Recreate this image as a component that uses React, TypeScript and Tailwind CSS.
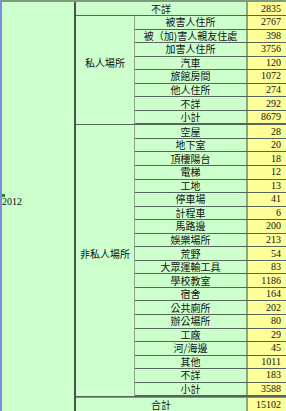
import React from "react";

const privateRows: [string, string][] = [
  ["被害人住所", "2767"],
  ["被（加)害人親友住處", "398"],
  ["加害人住所", "3756"],
  ["汽車", "120"],
  ["旅館房間", "1072"],
  ["他人住所", "274"],
  ["不詳", "292"],
  ["小計", "8679"],
];

const publicRows: [string, string][] = [
  ["空屋", "28"],
  ["地下室", "20"],
  ["頂樓陽台", "18"],
  ["電梯", "12"],
  ["工地", "13"],
  ["停車場", "41"],
  ["計程車", "6"],
  ["馬路邊", "200"],
  ["娛樂場所", "213"],
  ["荒野", "54"],
  ["大眾運輸工具", "83"],
  ["學校教室", "1186"],
  ["宿舍", "164"],
  ["公共廁所", "202"],
  ["辦公場所", "80"],
  ["工廠", "29"],
  ["河/海邊", "45"],
  ["其他", "1011"],
  ["不詳", "183"],
  ["小計", "3588"],
];

const cjk = { fontFamily: '"Noto Sans CJK TC", "Noto Sans", sans-serif' };
const serif = { fontFamily: '"Liberation Serif", serif' };

function Row({ label, value }: { label: string; value: string }) {
  return (
    <div className="flex h-[13.55px] border-b border-[#55665a]">
      <div
        className="w-[113px] border-r-2 border-[#8aa58a] flex items-center justify-center text-[10px] leading-none text-[#111] whitespace-nowrap"
        style={cjk}
      >
        {label}
      </div>
      <div
        className="flex-1 bg-[#ffff99] flex items-center justify-end pr-[5px] text-[10px] leading-none text-[#111]"
        style={serif}
      >
        {value}
      </div>
    </div>
  );
}

function Block({ title, rows }: { title: string; rows: [string, string][] }) {
  return (
    <div className="flex border-b border-[#55665a]">
      <div
        className="w-[59px] border-r border-[#8aa58a] flex items-center justify-center pb-[14px] text-[10px] leading-none text-[#111]"
        style={cjk}
      >
        {title}
      </div>
      <div className="flex-1 flex flex-col">
        {rows.map(([l, v], i) => (
          <Row key={i} label={l} value={v} />
        ))}
      </div>
    </div>
  );
}

export default function App() {
  return (
    <div className="w-[286px] h-[411px] overflow-hidden bg-[#ccffcc] border-t-2 border-l-2 border-t-[#7d9b7d] border-l-[#7f8be0] flex">
      <div className="w-[74px] shrink-0 border-r-2 border-[#45554a] flex items-center pb-[10px]">
        <span className="relative text-[10px] leading-none text-[#111]" style={serif}>
          <span className="absolute left-0 top-[-3px] w-[3px] h-[3px] bg-[#1a8a1a]" />
          2012
        </span>
      </div>
      <div className="flex-1 flex flex-col">
        <div className="flex h-[14px] border-b border-[#55665a] shrink-0">
          <div
            className="w-[172px] border-r-2 border-[#8aa58a] flex items-center justify-center text-[10px] leading-none text-[#111]"
            style={cjk}
          >
            不詳
          </div>
          <div
            className="flex-1 bg-[#ffff99] flex items-center justify-end pr-[5px] text-[10px] leading-none text-[#111]"
            style={serif}
          >
            2835
          </div>
        </div>
        <Block title="私人場所" rows={privateRows} />
        <Block title="非私人場所" rows={publicRows} />
        <div className="flex h-[14px] border-t border-[#7d9b7d] shrink-0">
          <div
            className="w-[172px] border-r-2 border-[#8aa58a] flex items-center justify-center text-[10px] leading-none text-[#111]"
            style={cjk}
          >
            合計
          </div>
          <div
            className="flex-1 bg-[#ffff99] flex items-center justify-end pr-[5px] text-[10px] leading-none text-[#111]"
            style={serif}
          >
            15102
          </div>
        </div>
      </div>
    </div>
  );
}
